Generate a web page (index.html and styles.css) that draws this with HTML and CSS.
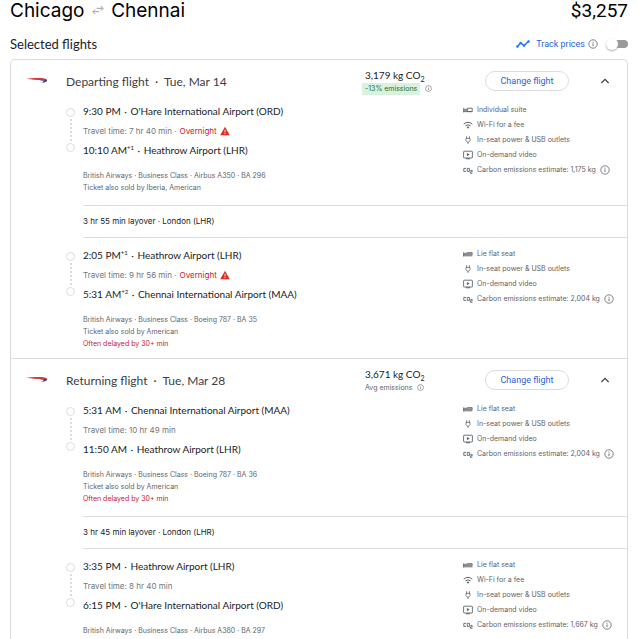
FILE: index.html
```
<!DOCTYPE html>
<html lang="en">
    <head>
        <meta charset="utf-8">
        <title>Chicago to Chennai</title>
        <meta name="viewport" content="width=device-width, initial-scale=1">
        <link rel="stylesheet" href="styles.css">
    </head>
    <body>
        <!-- shared icons -->
        <svg class="hidden">
            <symbol id="icon_info" viewBox="0 0 10 10">
                <circle cx="5" cy="5" r="4.2" fill="none" stroke="currentColor" stroke-width="0.8"/>
                <path d="M5 4.4v2.8M5 2.7v1" stroke="currentColor" stroke-width="0.9"/>
            </symbol>
            <symbol id="icon_suite" viewBox="0 0 10 10">
                <path d="M0.6 3.2v4.2M0.6 6.6h8.8M1.4 4.2h2.2v1.2h-2.2zM4.6 3.2h4.6v3.4h-4.6z" fill="none" stroke="currentColor" stroke-width="0.9"/>
            </symbol>
            <symbol id="icon_flat" viewBox="0 0 10 10">
                <path d="M0.6 3.4v4M0.4 6.8h9" fill="none" stroke="currentColor" stroke-width="0.9"/>
                <path d="M1.4 4.2h2v1.6h-2zM4.2 3.6h5v2.2h-5z" fill="#9aa0a6" stroke="currentColor" stroke-width="0.7"/>
            </symbol>
            <symbol id="icon_wifi" viewBox="0 0 10 10">
                <path d="M0.7 4.2Q5 0.4 9.3 4.2M2.4 5.9Q5 3.6 7.6 5.9" fill="none" stroke="currentColor" stroke-width="1"/>
                <path d="M3.6 7.1Q5 6 6.4 7.1L5 8.7z" fill="currentColor"/>
            </symbol>
            <symbol id="icon_power" viewBox="0 0 10 10">
                <path d="M3.6 1.2v2.2M6.4 1.2v2.2M3 3.4h4v2.2L5.6 7.2h-1.2L3 5.6zM5 7.2v1.8" fill="none" stroke="currentColor" stroke-width="0.8"/>
            </symbol>
            <symbol id="icon_video" viewBox="0 0 10 10">
                <rect x="0.6" y="1.2" width="8.8" height="6.8" rx="0.6" fill="none" stroke="currentColor" stroke-width="0.9"/>
                <path d="M3.9 2.9v3.4l2.8-1.7zM3 8.2h4v1h-4z" fill="currentColor"/>
            </symbol>
            <symbol id="icon_co2" viewBox="0 0 10 10">
                <path d="M3 3.4h-2.2v3h2.2M4.2 3.4h2.2v3h-2.2zM7.4 5.4h1.8v1.4h-1.8v1.5h2" fill="none" stroke="currentColor" stroke-width="0.9"/>
            </symbol>
            <symbol id="icon_warning" viewBox="0 0 10 10">
                <path d="M5 0.8L9.8 9.2H0.2z" fill="#d93025"/>
                <path d="M5 3.8v2.6M5 7.1v1" stroke="#fff" stroke-width="0.9"/>
            </symbol>
            <symbol id="icon_chevron" viewBox="0 0 10 10">
                <path d="M1.4 7L5 3.4L8.6 7" fill="none" stroke="currentColor" stroke-width="1.2"/>
            </symbol>
            <symbol id="logo_ba" viewBox="0 0 22 8">
                <path d="M0.5 1.8C5 1 14 0.8 18.5 1.4C21 1.9 22 3 20.6 4.4C20.4 3.2 19 2.9 16.5 3C11 3 5 2.8 0.5 1.8z" fill="#d8343f"/>
                <path d="M13 3.6C17 3.2 19.6 3.4 20.6 2.8C21.4 4.6 19 6 15 5.9C17 5.4 18 4.6 17 4.1C16 3.8 14.6 3.8 13 3.6z" fill="#2a3f7e"/>
            </symbol>
        </svg>

        <header class="trip">
            <h1>Chicago
                <svg class="swap" viewBox="0 0 12 10"><path d="M4.5 3.3h6.5M8.8 1l2.3 2.3L8.8 5.6M7 6.7H1M3.2 4.4L0.9 6.7L3.2 9" fill="none" stroke="currentColor"/></svg>
                Chennai</h1>
            <div class="price">$3,257</div>
        </header>

        <div class="toolbar">
            <h2>Selected flights</h2>
            <svg class="trend" viewBox="0 0 14 8"><path d="M1 7L4.6 3L8 5.6L13 1" fill="none" stroke="currentColor" stroke-width="1.4"/><circle cx="1.4" cy="6.6" r="1.2"/><circle cx="4.6" cy="3" r="1.2"/><circle cx="8" cy="5.6" r="1.2"/><circle cx="12.6" cy="1.4" r="1.2"/></svg>
            <label for="track">Track prices</label>
            <svg class="icon"><use href="#icon_info"/></svg>
            <input type="checkbox" id="track" class="switch">
        </div>

        <main class="card">
            <section class="flight">
                <div class="flight_head">
                    <svg class="logo"><use href="#logo_ba"/></svg>
                    <h3>Departing flight &nbsp;·&nbsp; Tue, Mar 14</h3>
                    <div class="co2">
                        <div>3,179 kg CO<sub>2</sub></div>
                        <div class="compare"><span class="low">-13% emissions</span><svg class="icon_small"><use href="#icon_info"/></svg></div>
                    </div>
                    <button class="change">Change flight</button>
                    <button class="collapse" aria-label="Collapse"><svg class="icon"><use href="#icon_chevron"/></svg></button>
                </div>
                <div class="leg">
                    <div class="route"><i></i></div>
                    <div class="stops">
                        <p class="stop">9:30 PM <b>·</b> O'Hare International Airport (ORD)</p>
                        <p class="travel">Travel time: 7 hr 40 min · <span class="alert">Overnight</span> <svg class="icon"><use href="#icon_warning"/></svg></p>
                        <p class="stop">10:10 AM<sup>+1</sup> <b>·</b> Heathrow Airport (LHR)</p>
                        <div class="details">
                            <p>British Airways · Business Class · Airbus A350 · BA 296</p>
                            <p>Ticket also sold by Iberia, American</p>
                        </div>
                    </div>
                    <ul class="amenities">
                        <li><svg class="icon"><use href="#icon_suite"/></svg>Individual suite</li>
                        <li><svg class="icon"><use href="#icon_wifi"/></svg>Wi-Fi for a fee</li>
                        <li><svg class="icon"><use href="#icon_power"/></svg>In-seat power &amp; USB outlets</li>
                        <li><svg class="icon"><use href="#icon_video"/></svg>On-demand video</li>
                        <li><svg class="icon"><use href="#icon_co2"/></svg>Carbon emissions estimate: 1,175 kg <svg class="icon"><use href="#icon_info"/></svg></li>
                    </ul>
                </div>
                <div class="layover">3 hr 55 min layover · London (LHR)</div>
                <div class="leg leg_last">
                    <div class="route"><i></i></div>
                    <div class="stops">
                        <p class="stop">2:05 PM<sup>+1</sup> <b>·</b> Heathrow Airport (LHR)</p>
                        <p class="travel">Travel time: 9 hr 56 min · <span class="alert">Overnight</span> <svg class="icon"><use href="#icon_warning"/></svg></p>
                        <p class="stop">5:31 AM<sup>+2</sup> <b>·</b> Chennai International Airport (MAA)</p>
                        <div class="details">
                            <p>British Airways · Business Class · Boeing 787 · BA 35</p>
                            <p>Ticket also sold by American</p>
                            <p class="alert">Often delayed by 30+ min</p>
                        </div>
                    </div>
                    <ul class="amenities">
                        <li><svg class="icon"><use href="#icon_flat"/></svg>Lie flat seat</li>
                        <li><svg class="icon"><use href="#icon_power"/></svg>In-seat power &amp; USB outlets</li>
                        <li><svg class="icon"><use href="#icon_video"/></svg>On-demand video</li>
                        <li><svg class="icon"><use href="#icon_co2"/></svg>Carbon emissions estimate: 2,004 kg <svg class="icon"><use href="#icon_info"/></svg></li>
                    </ul>
                </div>
            </section>

            <section class="flight">
                <div class="flight_head">
                    <svg class="logo"><use href="#logo_ba"/></svg>
                    <h3>Returning flight &nbsp;·&nbsp; Tue, Mar 28</h3>
                    <div class="co2">
                        <div>3,671 kg CO<sub>2</sub></div>
                        <div class="compare"><span>Avg emissions</span><svg class="icon_small"><use href="#icon_info"/></svg></div>
                    </div>
                    <button class="change">Change flight</button>
                    <button class="collapse" aria-label="Collapse"><svg class="icon"><use href="#icon_chevron"/></svg></button>
                </div>
                <div class="leg">
                    <div class="route"><i></i></div>
                    <div class="stops">
                        <p class="stop">5:31 AM <b>·</b> Chennai International Airport (MAA)</p>
                        <p class="travel">Travel time: 10 hr 49 min</p>
                        <p class="stop">11:50 AM <b>·</b> Heathrow Airport (LHR)</p>
                        <div class="details">
                            <p>British Airways · Business Class · Boeing 787 · BA 36</p>
                            <p>Ticket also sold by American</p>
                            <p class="alert">Often delayed by 30+ min</p>
                        </div>
                    </div>
                    <ul class="amenities">
                        <li><svg class="icon"><use href="#icon_flat"/></svg>Lie flat seat</li>
                        <li><svg class="icon"><use href="#icon_power"/></svg>In-seat power &amp; USB outlets</li>
                        <li><svg class="icon"><use href="#icon_video"/></svg>On-demand video</li>
                        <li><svg class="icon"><use href="#icon_co2"/></svg>Carbon emissions estimate: 2,004 kg <svg class="icon"><use href="#icon_info"/></svg></li>
                    </ul>
                </div>
                <div class="layover">3 hr 45 min layover · London (LHR)</div>
                <div class="leg leg_last">
                    <div class="route"><i></i></div>
                    <div class="stops">
                        <p class="stop">3:35 PM <b>·</b> Heathrow Airport (LHR)</p>
                        <p class="travel">Travel time: 8 hr 40 min</p>
                        <p class="stop">6:15 PM <b>·</b> O'Hare International Airport (ORD)</p>
                        <div class="details">
                            <p>British Airways · Business Class · Airbus A380 · BA 297</p>
                        </div>
                    </div>
                    <ul class="amenities">
                        <li><svg class="icon"><use href="#icon_flat"/></svg>Lie flat seat</li>
                        <li><svg class="icon"><use href="#icon_wifi"/></svg>Wi-Fi for a fee</li>
                        <li><svg class="icon"><use href="#icon_power"/></svg>In-seat power &amp; USB outlets</li>
                        <li><svg class="icon"><use href="#icon_video"/></svg>On-demand video</li>
                        <li><svg class="icon"><use href="#icon_co2"/></svg>Carbon emissions estimate: 1,667 kg <svg class="icon"><use href="#icon_info"/></svg></li>
                    </ul>
                </div>
            </section>
        </main>
    </body>
</html>
```
FILE: styles.css
```
* {
    box-sizing: border-box;
}
body {
    margin: 0;
    padding: 0 12px 0 10px;
    background-color: #fff;
    color: #202124;
    font-family: Lato, sans-serif;
    font-size: 10px;
}
h1, h2, h3, p, ul {
    margin: 0;
    padding: 0;
    font-weight: normal;
}
button {
    padding: 0;
    background: none;
    border: none;
    font-family: inherit;
    cursor: pointer;
}
.hidden {
    display: none;
}
.icon {
    width: 10px;
    height: 10px;
    flex: none;
}
.icon_small {
    width: 7px;
    height: 7px;
    flex: none;
}

/* trip title and total */
.trip {
    display: flex;
    justify-content: space-between;
    height: 24px;
    line-height: 21px;
    color: #000;
}
h1 {
    font-family: Inter, sans-serif;
    font-size: 19px;
}
.price {
    font-family: Roboto, sans-serif;
    font-size: 19px;
}
.swap {
    width: 12px;
    height: 10px;
    margin: 0 2px;
    color: #9aa0a6;
    vertical-align: 2px;
}
.toolbar {
    display: flex;
    align-items: center;
    height: 35px;
    padding-top: 4px;
}
h2 {
    flex: 1;
    font-size: 13px;
}
.trend {
    width: 14px;
    height: 8px;
    margin-right: 6px;
    color: #1a73e8;
    fill: #1a73e8;
}
.toolbar .icon {
    color: #5f6368;
}
.toolbar label {
    margin-right: 3px;
    color: #2a62d8;
    font-family: Roboto, sans-serif;
    font-size: 9px;
}
.switch {
    appearance: none;
    width: 20px;
    height: 8px;
    margin: 0 0 0 10px;
    border-radius: 4px;
    background-color: #9a9a9a;
}
.switch::before {
    content: "";
    display: block;
    width: 12px;
    height: 12px;
    margin: -2px 0 0 -2px;
    border-radius: 50%;
    background-color: #fff;
    box-shadow: 0 1px 2px #aaa;
}

/* itinerary */
.card {
    min-height: calc(100vh - 59px);
    border: 1px solid #dadce0;
    border-bottom: none;
    border-radius: 5px 5px 0 0;
}
.flight + .flight {
    border-top: 1px solid #dadce0;
}
.flight_head {
    display: flex;
    align-items: center;
    height: 42px;
    padding: 0 17px 0 15px;
}
.logo {
    width: 22px;
    height: 8px;
    margin-right: 18px;
}
h3 {
    flex: 1;
    color: #3c4043;
    font-size: 12px;
}
.co2 {
    width: 120px;
    line-height: 15px;
}
sub {
    line-height: 0;
    font-size: 7px;
}
sup {
    line-height: 0;
    font-size: 6px;
}
.compare {
    display: flex;
    align-items: center;
    gap: 5px;
    height: 12px;
    color: #5f6368;
    font-family: Inter, sans-serif;
    font-size: 7px;
}
.low {
    margin-left: -3px;
    padding: 0 3px;
    background-color: #daf1e0;
    color: #137333;
    line-height: 12px;
}
.change {
    width: 84px;
    height: 20px;
    margin-right: 31px;
    border: 1px solid #dadce0;
    border-radius: 10px;
    color: #2a62d8;
    font-family: Roboto, sans-serif;
    font-size: 9px;
}
.collapse {
    display: flex;
    color: #3c4043;
}
.leg {
    display: flex;
    padding: 0 0 11px 56px;
}
.leg_last {
    padding: 8px 0 8px 56px;
}
.route {
    display: flex;
    flex-direction: column;
    align-items: center;
    width: 7px;
    height: 57px;
    margin-right: 9px;
    padding: 6px 0 7px;
}
.route::before, .route::after {
    content: "";
    width: 7px;
    height: 7px;
    border: 1px solid #dadce0;
    border-radius: 50%;
}
.route i {
    flex: 1;
    margin: 2px 0;
    border-left: 2px dotted #dadce0;
}
.stops {
    flex: 1;
}
.stop {
    font-size: 10px;
    line-height: 18px;
}
.stop b {
    margin: 0 1px;
    font-weight: normal;
}
.travel {
    display: flex;
    align-items: center;
    gap: 3px;
    height: 21px;
    color: #70757a;
    font-family: Inter, sans-serif;
    font-size: 8px;
}
.details {
    margin-top: 11px;
    color: #5f6368;
    font-family: Inter, sans-serif;
    font-size: 7px;
    line-height: 12px;
}
.travel .alert, .details .alert {
    color: #c5221f;
}
.amenities {
    width: 164px;
    color: #5f6368;
    font-family: Inter, sans-serif;
    font-size: 7px;
    list-style: none;
}
.amenities li {
    display: flex;
    align-items: center;
    gap: 4px;
    height: 15px;
}
.layover {
    margin-left: 72px;
    border: 1px solid #dadce0;
    border-width: 1px 0;
    font-family: Inter, sans-serif;
    font-size: 8px;
    line-height: 31px;
}
```
